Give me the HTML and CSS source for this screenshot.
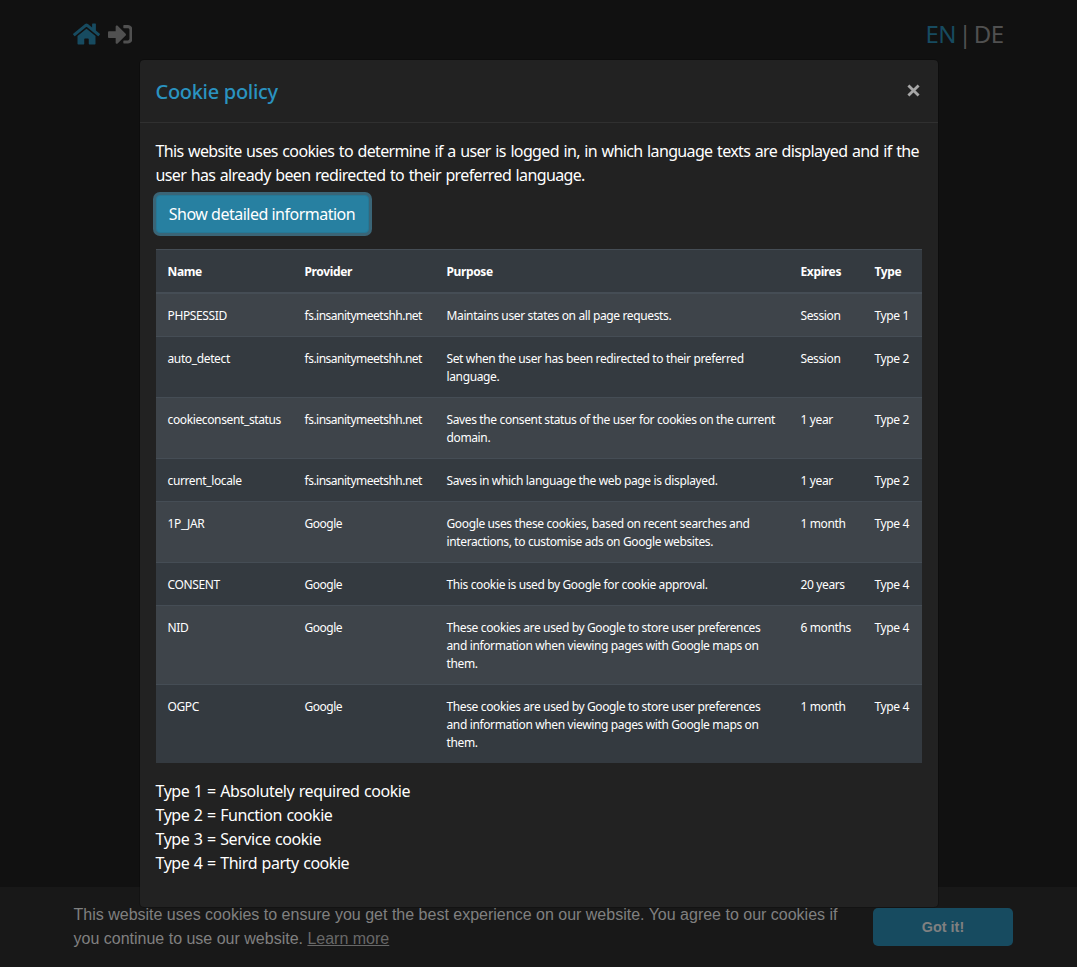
FILE: index.html
```html
<!DOCTYPE html>
<html lang="en">
<head>
<meta charset="utf-8">
<title>Cookie policy</title>
<link rel="stylesheet" href="styles.css">
</head>
<body>
<div class="page">
  <header class="topbar">
    <nav class="icons">
      <svg class="icon-home" viewBox="0 0 576 512"><path d="M280.37 148.26L96 300.11V464a16 16 0 0 0 16 16l112.06-.29a16 16 0 0 0 15.92-16V368a16 16 0 0 1 16-16h64a16 16 0 0 1 16 16v95.64a16 16 0 0 0 16 16.05L464 480a16 16 0 0 0 16-16V300L295.67 148.26a12.19 12.19 0 0 0-15.3 0zM571.6 251.47L488 182.56V44.05a12 12 0 0 0-12-12h-56a12 12 0 0 0-12 12v72.61L318.47 43a48 48 0 0 0-61 0L4.34 251.47a12 12 0 0 0-1.6 16.9l25.5 31A12 12 0 0 0 45.15 301l235.22-193.74a12.19 12.19 0 0 1 15.3 0L530.9 301a12 12 0 0 0 16.9-1.6l25.5-31a12 12 0 0 0-1.7-16.93z"/></svg>
      <svg class="icon-login" viewBox="0 0 512 512"><path d="M416 448h-84c-6.600 0-12-5.400-12-12v-40c0-6.600 5.400-12 12-12h84c17.700 0 32-14.300 32-32V160c0-17.700-14.300-32-32-32h-84c-6.600 0-12-5.400-12-12V76c0-6.600 5.400-12 12-12h84c53 0 96 43 96 96v192c0 53-43 96-96 96zm-47-201L201 79c-15-15-41-4.500-41 17v96H24c-13.300 0-24 10.700-24 24v96c0 13.300 10.700 24 24 24h136v96c0 21.500 26 32 41 17l168-168c9.300-9.400 9.300-24.600 0-34z"/></svg>
    </nav>
    <div class="langs"><span class="active">EN</span> | DE</div>
  </header>
  <footer class="consent">
    <p class="consent-text">This website uses cookies to ensure you get the best experience on our website. You agree to our cookies if<br>you continue to use our website. <a class="more">Learn more</a></p>
    <button class="got-it">Got it!</button>
  </footer>
</div>
<div class="modal">
  <div class="modal-header">
    <h5 class="title">Cookie policy</h5>
    <svg class="close" viewBox="0 0 12 12"><path d="M1.300 1.300L10.700 10.700M10.700 1.300L1.300 10.700"/></svg>
  </div>
  <div class="modal-body">
    <p class="intro">This website uses cookies to determine if a user is logged in, in which language texts are displayed and if the<br>user has already been redirected to their preferred language.</p>
    <button class="details">Show detailed information</button>
    <table class="cookies">
      <colgroup><col class="c-name"><col class="c-provider"><col class="c-purpose"><col class="c-expires"><col class="c-type"></colgroup>
      <thead><tr><th>Name</th><th>Provider</th><th>Purpose</th><th>Expires</th><th>Type</th></tr></thead>
      <tbody>
        <tr><td>PHPSESSID</td><td>fs.insanitymeetshh.net</td><td>Maintains user states on all page requests.</td><td>Session</td><td>Type 1</td></tr>
        <tr><td>auto_detect</td><td>fs.insanitymeetshh.net</td><td>Set when the user has been redirected to their preferred<br>language.</td><td>Session</td><td>Type 2</td></tr>
        <tr><td>cookieconsent_status</td><td>fs.insanitymeetshh.net</td><td>Saves the consent status of the user for cookies on the current<br>domain.</td><td>1 year</td><td>Type 2</td></tr>
        <tr><td>current_locale</td><td>fs.insanitymeetshh.net</td><td>Saves in which language the web page is displayed.</td><td>1 year</td><td>Type 2</td></tr>
        <tr><td>1P_JAR</td><td>Google</td><td>Google uses these cookies, based on recent searches and<br>interactions, to customise ads on Google websites.</td><td>1 month</td><td>Type 4</td></tr>
        <tr><td>CONSENT</td><td>Google</td><td>This cookie is used by Google for cookie approval.</td><td>20 years</td><td>Type 4</td></tr>
        <tr><td>NID</td><td>Google</td><td>These cookies are used by Google to store user preferences<br>and information when viewing pages with Google maps on<br>them.</td><td>6 months</td><td>Type 4</td></tr>
        <tr><td>OGPC</td><td>Google</td><td>These cookies are used by Google to store user preferences<br>and information when viewing pages with Google maps on<br>them.</td><td>1 month</td><td>Type 4</td></tr>
      </tbody>
    </table>
    <p class="legend">Type 1 = Absolutely required cookie<br>Type 2 = Function cookie<br>Type 3 = Service cookie<br>Type 4 = Third party cookie</p>
  </div>
</div>
</body>
</html>
```

FILE: styles.css
```css
* { box-sizing: border-box; }
body {
  margin: 0;
  height: 967px;
  overflow: hidden;
  background: #111;
  color: #fff;
  font: 16px/24px "Noto Sans", "Open Sans", sans-serif;
  white-space: nowrap;
}
p, h5 { margin: 0; }
.page { display: flex; flex-direction: column; justify-content: space-between; height: 967px; }
.topbar { display: flex; justify-content: space-between; padding: 16px 73.5px 0 73px; }
.icons { display: flex; gap: 7.5px; padding-top: 6px; }
.icon-home { width: 27px; height: 24px; fill: #174b60; }
.icon-login { width: 24.5px; height: 24.5px; fill: #505050; }
.langs { font-size: 24px; line-height: 36px; letter-spacing: -0.6px; word-spacing: -3px; color: #505050; }
.active { color: #174b60; }
.consent {
  display: flex;
  justify-content: space-between;
  height: 80px;
  padding: 16px 64px 0 73.5px;
  background: #181818;
  color: #808080;
  font-family: "Liberation Sans", Arial, sans-serif;
}
.more { color: #686868; text-decoration: underline; }
.got-it {
  width: 140px;
  height: 38px;
  margin-top: 5px;
  border: 0;
  border-radius: 5px;
  background: #174b60;
  color: #808080;
  font: bold 14.4px/22px "Liberation Sans", Arial, sans-serif;
}
.modal {
  position: absolute;
  top: 59px;
  left: 138.5px;
  width: 800px;
  height: 849px;
  border: 1px solid rgba(0, 0, 0, .2);
  border-radius: 5px;
  background: #222;
  background-clip: padding-box;
}
.modal-header {
  display: flex;
  justify-content: space-between;
  height: 63px;
  padding: 17px 16px 15px;
  border-bottom: 1px solid #303030;
}
.title { color: #2a93c0; font-size: 20px; font-weight: 500; line-height: 30px; letter-spacing: -0.3px; }
.close { width: 13px; height: 13px; margin: 7px 2px 0 0; fill: none; stroke: #a7a7a7; stroke-width: 2.6; }
.modal-body { display: flex; flex-direction: column; align-items: flex-start; padding: 16px; }
.intro { letter-spacing: -0.64px; word-spacing: 1px; }
.details {
  width: 213px;
  height: 38px;
  margin: 8px 0 16px;
  padding: 0;
  border: 1px solid #257896;
  border-radius: 4px;
  background: #2780a1;
  box-shadow: 0 0 0 3px #3a6577;
  color: #fff;
  font: inherit;
  letter-spacing: -0.5px;
}
.cookies {
  width: 766px;
  table-layout: fixed;
  border-collapse: collapse;
  background: #343a40;
  font-size: 12px;
  line-height: 18px;
  letter-spacing: -0.37px;
}
.cookies th, .cookies td { padding: 13px 12px 11px; border-top: 1px solid #454d55; text-align: left; vertical-align: top; }
.cookies thead th { border-bottom: 2px solid #454d55; }
.cookies tbody tr:nth-child(odd) { background: #3e444a; }
.cookies td:nth-child(2) { letter-spacing: -0.5px; }
.c-name { width: 137px; }
.c-provider { width: 142px; }
.c-purpose { width: 354px; }
.c-expires { width: 74px; }
.c-type { width: 59px; }
.legend { margin-top: 16px; letter-spacing: -0.45px; word-spacing: 0.8px; }
```
